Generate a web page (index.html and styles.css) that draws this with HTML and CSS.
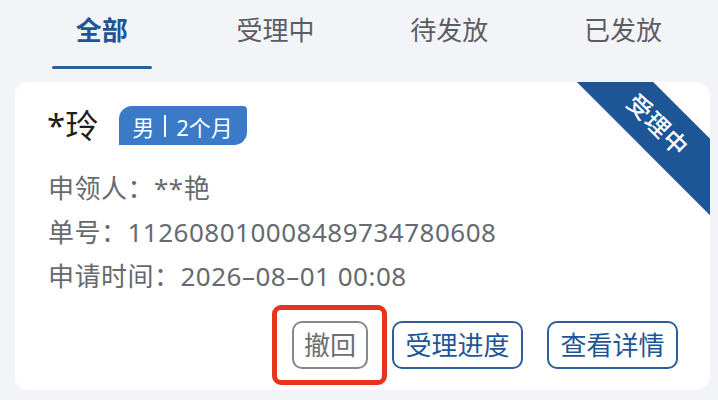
FILE: index.html
```html
<!DOCTYPE html>
<html lang="zh-CN">
<head>
<meta charset="utf-8">
<link rel="stylesheet" href="styles.css">
</head>
<body>
<div class="page">
  <nav class="tabs">
    <div class="tab active"><span class="tab-label">全部</span><i class="tab-line"></i></div>
    <div class="tab"><span class="tab-label">受理中</span></div>
    <div class="tab"><span class="tab-label">待发放</span></div>
    <div class="tab"><span class="tab-label">已发放</span></div>
  </nav>
  <section class="card">
    <div class="ribbon">受理中</div>
    <div class="name-row">
      <span class="name">*玲</span>
      <span class="tag">男<i class="sep"></i>2个月</span>
    </div>
    <div class="info">
      <div class="line">申领人：**艳</div>
      <div class="line">单号：112608010008489734780608</div>
      <div class="line">申请时间：2026–08–01 00:08</div>
    </div>
    <div class="actions">
      <span class="highlight-wrap">
        <button class="btn btn-gray">撤回</button>
        <span class="highlight"></span>
      </span>
      <button class="btn">受理进度</button>
      <button class="btn">查看详情</button>
    </div>
  </section>
</div>
</body>
</html>
```
FILE: styles.css
```css
* { box-sizing: border-box; }
html, body {
  margin: 0;
  padding: 0;
  background: #f3f4f8;
  font-family: "Noto Sans", "Noto Sans CJK SC", sans-serif;
}
.page {
  width: 718px;
  height: 400px;
  padding: 0 8px 0 15px;
  overflow: hidden;
}
.tabs {
  display: flex;
  height: 69px;
}
.tab {
  flex: 1;
  display: flex;
  flex-direction: column;
  align-items: center;
  padding-top: 13px;
}
.tab-label {
  font-size: 26px;
  line-height: 34px;
  color: #5b5d63;
}
.tab.active .tab-label {
  color: #1e5596;
  font-weight: 700;
}
.tab-line {
  display: block;
  width: 100px;
  height: 3px;
  margin-top: 19px;
  background: #2a5f9c;
  border-radius: 2px;
}
.card {
  position: relative;
  overflow: hidden;
  margin-top: 13px;
  height: 308px;
  background: #fff;
  border-radius: 14px;
  padding: 24px 32px 21px 33px;
}
.ribbon {
  position: absolute;
  left: 523px;
  top: 16px;
  width: 240px;
  height: 54px;
  background: #1d5596;
  color: #fff;
  font-size: 24px;
  font-weight: 500;
  line-height: 54px;
  text-align: center;
  letter-spacing: 1px;
  transform: rotate(45deg);
}
.name-row {
  display: flex;
  align-items: center;
  height: 39px;
}
.name {
  font-size: 33px;
  color: #1f1f1f;
  margin-left: -1px;
  line-height: 39px;
}
.tag {
  display: flex;
  align-items: center;
  height: 39px;
  margin-left: 21px;
  padding: 0 14px 0 13px;
  background: #3a7ac6;
  color: #fff;
  font-size: 22px;
  border-radius: 13px 4px 13px 0;
}
.sep {
  display: block;
  width: 2px;
  height: 22px;
  background: #fff;
  margin: 0 10px;
}
.info {
  margin-top: 21px;
}
.line {
  font-size: 26px;
  line-height: 44px;
  height: 44px;
  color: #666a70;
  letter-spacing: 0.5px;
  white-space: nowrap;
}
.actions {
  display: flex;
  justify-content: flex-end;
  gap: 24px;
  margin-top: 23px;
}
.highlight-wrap {
  position: relative;
  display: flex;
}
.btn {
  height: 48px;
  padding: 0 11.5px;
  border: 2px solid #2a5f9c;
  border-radius: 10px;
  background: #fff;
  color: #1e5596;
  font-family: "Noto Sans", "Noto Sans CJK SC", sans-serif;
  font-size: 26px;
  line-height: 44px;
}
.btn-gray {
  border-color: #85888d;
  color: #6b6e73;
  padding: 0 10px;
}
.highlight {
  position: absolute;
  left: -20px;
  right: -19px;
  top: -16px;
  bottom: -16px;
  border: 5px solid #e8321f;
  border-radius: 9px;
}
```
